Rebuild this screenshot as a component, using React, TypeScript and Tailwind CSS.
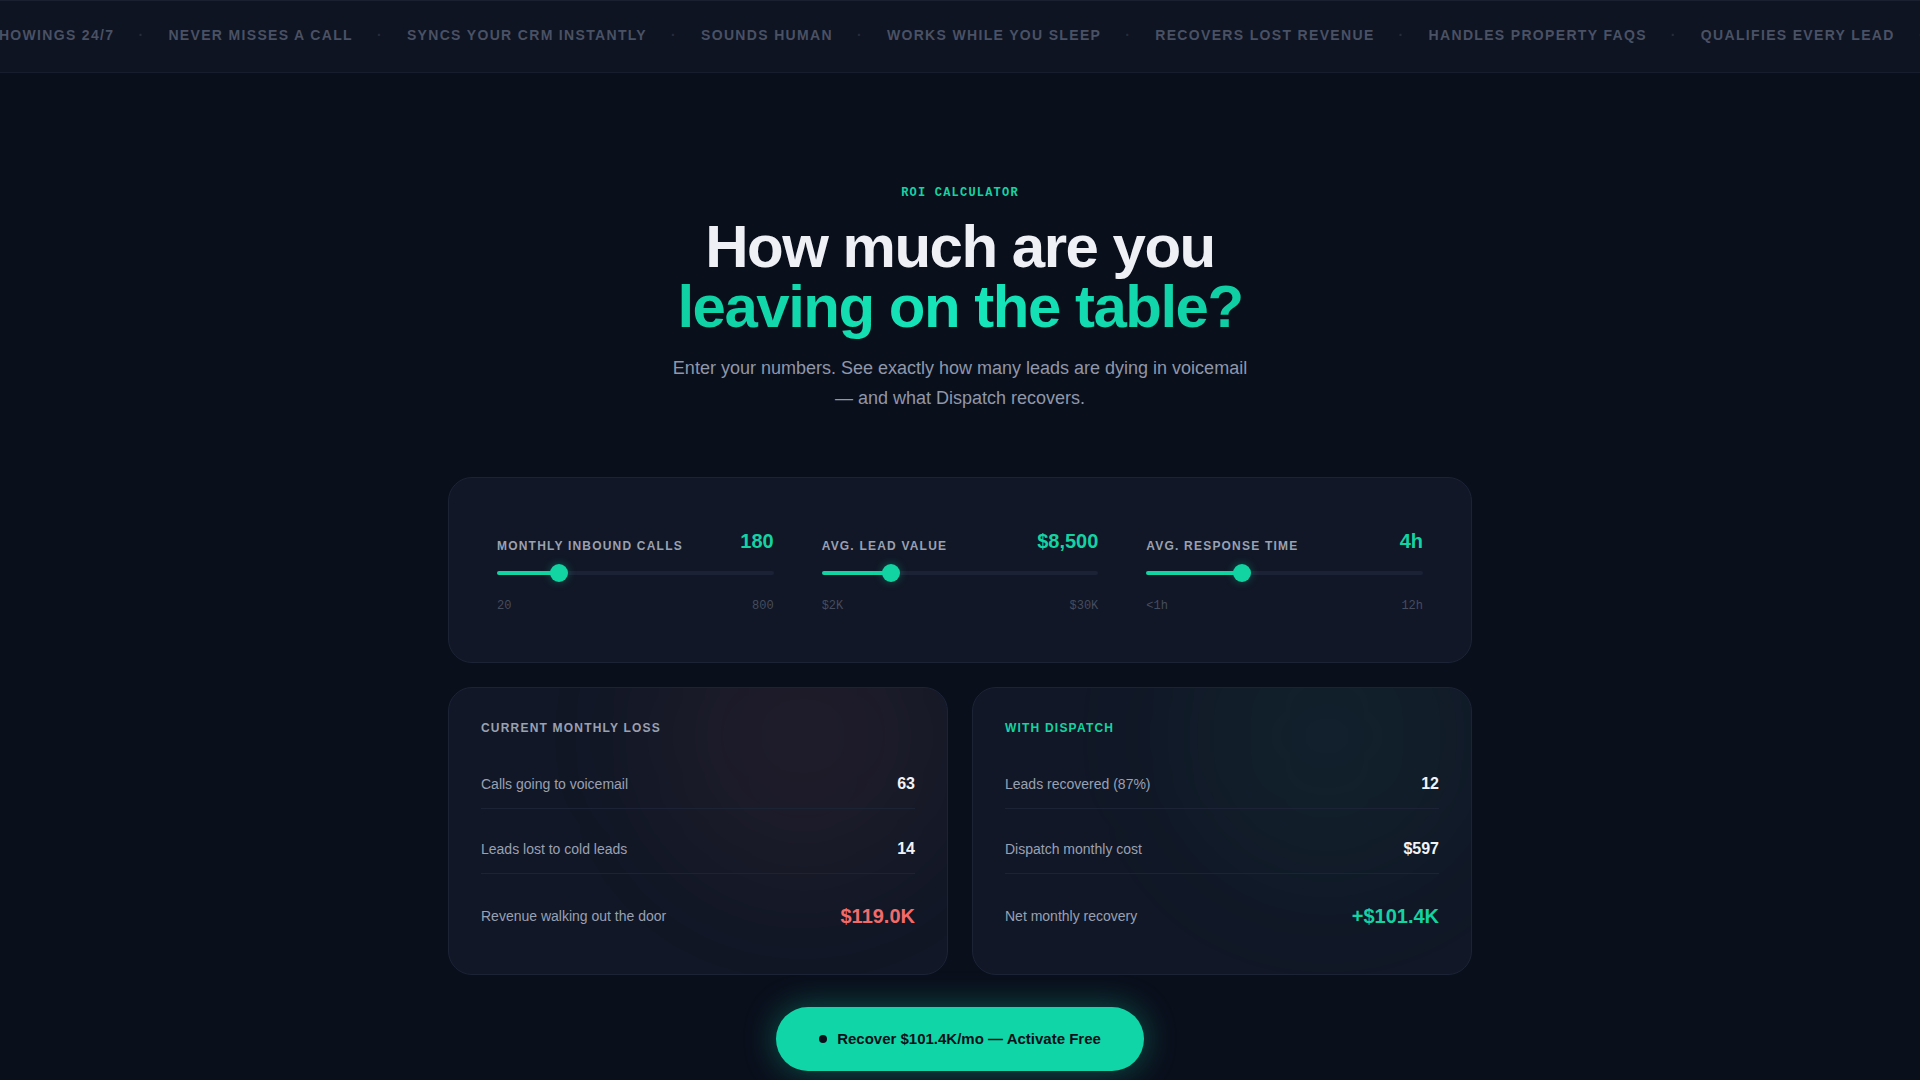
import React from 'react';

const tickerItems = [
  'BOOKS SHOWINGS 24/7',
  'NEVER MISSES A CALL',
  'SYNCS YOUR CRM INSTANTLY',
  'SOUNDS HUMAN',
  'WORKS WHILE YOU SLEEP',
  'RECOVERS LOST REVENUE',
  'HANDLES PROPERTY FAQS',
  'QUALIFIES EVERY LEAD',
  'BOOKS SHOWINGS 24/7',
  'NEVER MISSES A CALL',
];

const sliders = [
  { label: 'MONTHLY INBOUND CALLS', value: '180', pct: (180 - 20) / (800 - 20), min: '20', max: '800' },
  { label: 'AVG. LEAD VALUE', value: '$8,500', pct: (8500 - 2000) / (30000 - 2000), min: '$2K', max: '$30K' },
  { label: 'AVG. RESPONSE TIME', value: '4h', pct: 4 / 12, min: '<1h', max: '12h' },
];

function Slider({ label, value, pct, min, max }: { label: string; value: string; pct: number; min: string; max: string }) {
  return (
    <div>
      <div className="flex items-end justify-between">
        <span className="pb-[2px] text-xs leading-4 font-bold tracking-widest text-[#9aa1b2]">{label}</span>
        <span className="text-xl leading-[30px] font-bold text-[#14d3a3]">{value}</span>
      </div>
      <div className="relative mt-[8px] h-[18px]">
        <div className="absolute inset-x-0 top-[7px] h-1 rounded-full bg-[#1c2236]" />
        <div
          className="absolute left-0 top-[7px] h-1 rounded-full bg-[#12d3a2]"
          style={{ width: `calc(${pct} * (100% - 18px) + 9px)` }}
        />
        <div
          className="absolute top-0 size-[18px] rounded-full bg-[#12d3a2] shadow-[0_0_8px_rgba(18,211,162,0.35)]"
          style={{ left: `calc(${pct} * (100% - 18px))` }}
        />
      </div>
      <div className="mt-4 flex justify-between font-['Liberation_Mono',monospace] text-xs leading-4 text-[#454c5e]">
        <span>{min}</span>
        <span>{max}</span>
      </div>
    </div>
  );
}

function Row({ label, value, valueClass, last }: { label: string; value: string; valueClass: string; last?: boolean }) {
  return (
    <div className={`flex items-center justify-between ${last ? 'py-3' : 'border-b border-[#1c2335] py-3.5'}`}>
      <span className="text-sm leading-5 text-[#99a1b3]">{label}</span>
      <span className={valueClass}>{value}</span>
    </div>
  );
}

export default function App() {
  return (
    <div className="min-h-screen overflow-hidden bg-[#0a0f1c] font-['Liberation_Sans',Arial,sans-serif]">
      {/* Ticker */}
      <div className="overflow-hidden border-y border-t-[#1a2030] border-b-[#171d2c] bg-[#0e1422] pt-6 pb-[27px]">
        <div className="-ml-[75px] flex whitespace-nowrap text-sm leading-5 font-bold tracking-[0.095em] text-[#4a5164]">
          {tickerItems.map((item, i) => (
            <div key={i} className="flex items-center">
              <span>{item}</span>
              <span className="mx-6 text-[#262c3b]">·</span>
            </div>
          ))}
        </div>
      </div>

      {/* Calculator */}
      <section className="mx-auto flex w-[1024px] flex-col items-center pt-28 pb-16">
        <p className="font-['Liberation_Mono',monospace] text-xs leading-4 font-bold tracking-widest text-[#14d3a3]">
          ROI CALCULATOR
        </p>
        <h1 className="mt-4 text-center text-6xl leading-none font-bold tracking-tight text-[#eef0f5]">
          How much are you
          <br />
          <span className="bg-gradient-to-r from-[#0fd0a2] via-[#16e6bb] to-[#10cda3] bg-clip-text text-transparent">
            leaving on the table?
          </span>
        </h1>
        <p className="mt-4 max-w-[590px] text-center text-lg leading-[30px] text-[#8f97aa]">
          Enter your numbers. See exactly how many leads are dying in voicemail — and what Dispatch recovers.
        </p>

        <div className="mt-16 grid w-full grid-cols-3 gap-12 rounded-3xl border border-[#1c2335] bg-[#111726] p-12">
          {sliders.map((s) => (
            <Slider key={s.label} {...s} />
          ))}
        </div>

        <div className="mt-6 grid w-full grid-cols-2 gap-6">
          <div className="relative overflow-hidden rounded-3xl border border-[#1c2335] bg-[#111726] p-8">
            <div className="pointer-events-none absolute -top-24 right-0 size-72 rounded-full bg-[#f87171]/[0.06] blur-3xl" />
            <p className="relative mb-6 text-xs leading-4 font-bold tracking-widest text-[#9aa1b2]">CURRENT MONTHLY LOSS</p>
            <div className="relative space-y-4">
              <Row label="Calls going to voicemail" value="63" valueClass="text-base leading-5 font-bold text-[#f1f3f7]" />
              <Row label="Leads lost to cold leads" value="14" valueClass="text-base leading-5 font-bold text-[#f1f3f7]" />
              <Row last label="Revenue walking out the door" value="$119.0K" valueClass="text-xl leading-7 font-bold text-[#f26b6b]" />
            </div>
          </div>
          <div className="relative overflow-hidden rounded-3xl border border-[#1c2335] bg-[#111726] p-8">
            <div className="pointer-events-none absolute -top-24 right-0 size-72 rounded-full bg-[#14d3a3]/[0.05] blur-3xl" />
            <p className="relative mb-6 text-xs leading-4 font-bold tracking-widest text-[#14d3a3]">WITH DISPATCH</p>
            <div className="relative space-y-4">
              <Row label="Leads recovered (87%)" value="12" valueClass="text-base leading-5 font-bold text-[#f1f3f7]" />
              <Row label="Dispatch monthly cost" value="$597" valueClass="text-base leading-5 font-bold text-[#f1f3f7]" />
              <Row last label="Net monthly recovery" value="+$101.4K" valueClass="text-xl leading-7 font-bold text-[#14d3a3]" />
            </div>
          </div>
        </div>

        <button className="mt-8 flex items-center gap-2.5 rounded-full bg-[#10d6a7] px-[43px] py-5 text-[15px] leading-6 font-bold text-[#0a0f1c] shadow-[0_0_32px_rgba(16,214,167,0.35)]">
          <span className="size-2 rounded-full bg-[#0a0f1c]" />
          Recover $101.4K/mo — Activate Free
        </button>
      </section>
    </div>
  );
}
